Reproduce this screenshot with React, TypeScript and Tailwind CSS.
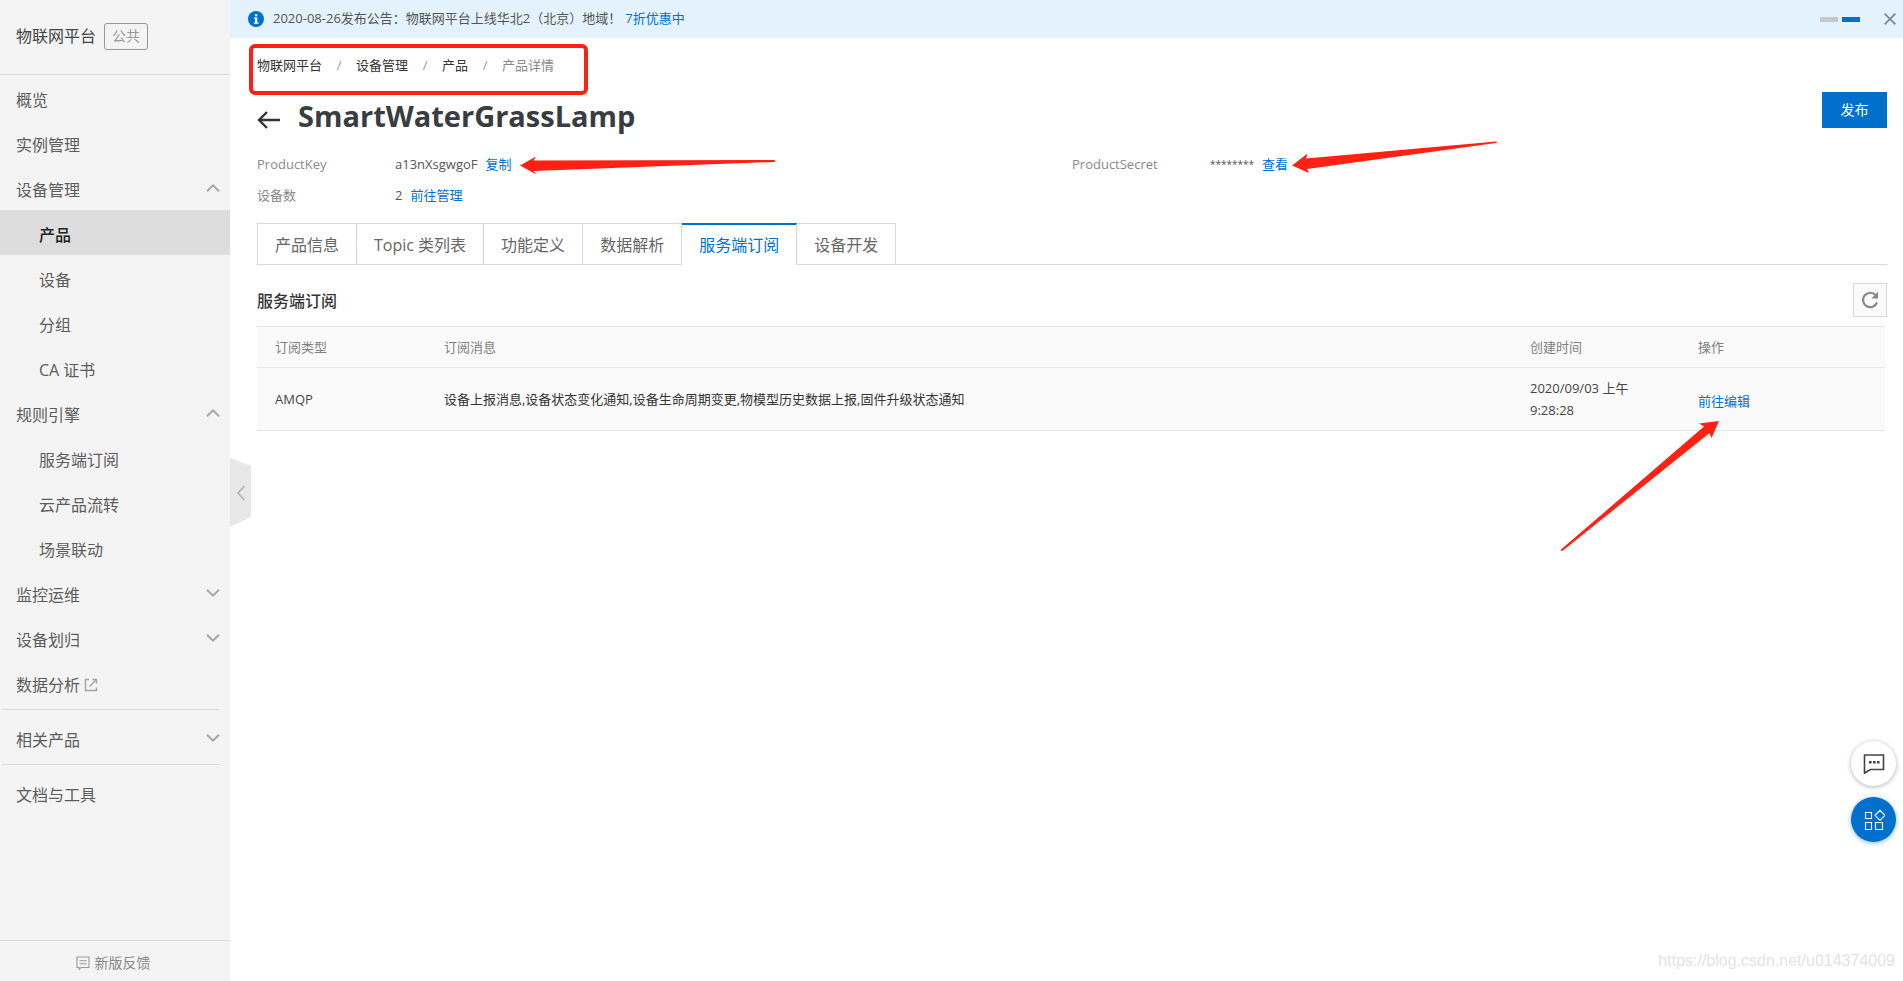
import React, { useState } from 'react';
import clsx from 'clsx';

type NavItem = {
  label: string;
  children?: string[];
  arrow?: 'up' | 'down';
  external?: boolean;
};

const mainNav: NavItem[] = [
  { label: '概览' },
  { label: '实例管理' },
  { label: '设备管理', arrow: 'up', children: ['产品', '设备', '分组', 'CA 证书'] },
  { label: '规则引擎', arrow: 'up', children: ['服务端订阅', '云产品流转', '场景联动'] },
  { label: '监控运维', arrow: 'down' },
  { label: '设备划归', arrow: 'down' },
  { label: '数据分析', external: true },
];

const tabs = ['产品信息', 'Topic 类列表', '功能定义', '数据解析', '服务端订阅', '设备开发'];

const crumbs = ['物联网平台', '设备管理', '产品'];

const Chevron: React.FC<{ dir: 'up' | 'down' }> = ({ dir }) => (
  <svg width="14" height="8" viewBox="0 0 14 8" fill="none" stroke="#a6a6a6" strokeWidth="2" className="mb-1">
    <path d={dir === 'up' ? 'M1 7.2 7 1.4l6 5.8' : 'M1 .8 7 6.6l6-5.8'} />
  </svg>
);

const SideLink: React.FC<{ item: NavItem }> = ({ item }) => (
  <a href="#" className="flex h-[45px] items-center justify-between pt-1 pr-[10px] pl-4 text-base">
    <span className="flex items-center gap-1">
      {item.label}
      {item.external && (
        <svg width="14" height="14" viewBox="0 0 14 14" fill="none" stroke="#a3a3a3" strokeWidth="1.4">
          <path d="M5 1.5H1.5v11h11V9.5M5.5 8.5l6-6M8.5 1.5h4V5.500" />
        </svg>
      )}
    </span>
    {item.arrow && <Chevron dir={item.arrow} />}
  </a>
);

const Sidebar: React.FC = () => (
  <aside className="relative flex w-[230px] shrink-0 flex-col bg-[#f4f4f4] text-[#5c5c5c]">
    <div className="flex h-[75px] items-center gap-2 border-b border-[#d9d9d9] pb-[2px] pl-4">
      <span className="text-base text-[#444]">物联网平台</span>
      <span className="flex h-[27px] items-center rounded-[3px] border border-[#999] px-[7px] text-sm text-[#999]">公共</span>
    </div>
    <nav className="flex-1">
      {mainNav.map((item) => (
        <div key={item.label}>
          <SideLink item={item} />
          {item.children?.map((child) => (
            <a
              key={child}
              href="#"
              className={clsx(
                'flex h-[45px] items-center pt-1 pl-[39px] text-base',
                child === '产品' && 'bg-[#ddd] font-medium text-[#222]'
              )}
            >
              {child}
            </a>
          ))}
        </div>
      ))}
      <div className="mr-[11px] ml-[2px] border-b border-[#d9d9d9] pt-1" />
      <div className="pt-[5px]">
        <SideLink item={{ label: '相关产品', arrow: 'down' }} />
      </div>
      <div className="mr-[11px] ml-[2px] border-b border-[#d9d9d9] pt-1" />
      <div className="pt-[5px]">
        <SideLink item={{ label: '文档与工具' }} />
      </div>
    </nav>
    <a href="#" className="flex h-[41px] items-center justify-center gap-[5px] border-t border-[#d9d9d9] pt-1 pr-1 text-sm text-[#888]">
      <svg width="14" height="14" viewBox="0 0 14 14" fill="none" stroke="#999" strokeWidth="1.1">
        <path d="M1 1h12v10.5H5L3.2 13.2V11.5H1zM3.5 4.8h7M3.5 7.8h7" />
      </svg>
      新版反馈
    </a>
    <button type="button" aria-label="收起菜单" className="absolute top-[458px] left-full cursor-pointer">
      <svg width="21" height="69" viewBox="0 0 21 69" fill="none">
        <path d="M0 0 21 8v51L0 69z" fill="#e8e8e8" />
        <path d="M14.5 28 8 35l6.5 7" stroke="#b5b5b5" strokeWidth="1.8" />
      </svg>
    </button>
  </aside>
);

const Notice: React.FC = () => (
  <div className="flex h-[38px] items-center bg-[#e3f2fd] pr-[7px] pl-[18px] text-[13px] text-[#555]">
    <svg width="16" height="16" viewBox="0 0 16 16" className="mr-[9px]">
      <circle cx="8" cy="8" r="8" fill="#0070cc" />
      <path d="M7 3.2h2.3v2H7zM6 6.5h3.3v5h1.2v1.2H5.8v-1.2H7V7.7H6z" fill="#fff" />
    </svg>
    <span>2020-08-26发布公告：物联网平台上线华北2（北京）地域！</span>
    <a href="#" className="ml-1 text-[#0070cc]">7折优惠中</a>
    <div className="ml-auto flex gap-1">
      <span className="h-[5px] w-[18px] bg-[#c4c8cb]" />
      <span className="h-[5px] w-[18px] bg-[#0070cc]" />
    </div>
    <button type="button" aria-label="关闭" className="ml-6 cursor-pointer">
      <svg width="12" height="12" viewBox="0 0 12 12" stroke="#7d858b" strokeWidth="1.7">
        <path d="M.6.6l10.8 10.8M11.4.6.6 11.4" />
      </svg>
    </button>
  </div>
);

const Breadcrumb: React.FC = () => (
  <nav className="relative flex h-6 items-center text-[13px] text-[#333]">
    {crumbs.map((crumb) => (
      <React.Fragment key={crumb}>
        <a href="#">{crumb}</a>
        <span className="w-[34px] text-center text-[#999]">/</span>
      </React.Fragment>
    ))}
    <span className="text-[#888]">产品详情</span>
    <span className="pointer-events-none absolute -top-[10px] -left-2 h-[51px] w-[339px] rounded-md border-4 border-[#fb2116]" />
  </nav>
);

const Details: React.FC = () => (
  <dl className="grid grid-cols-2 text-[13px] leading-[31px] text-[#555]">
    <div className="flex">
      <dt className="w-[138px] text-[#888]">ProductKey</dt>
      <dd className="relative flex gap-2">
        a13nXsgwgoF
        <a href="#" className="text-[#0070cc]">复制</a>
        <svg width="256" height="19" viewBox="0 0 256 19" className="absolute top-[7px] left-full ml-2" fill="#ff2114">
          <path d="M0 9.500 16 .5 13.500 4.500 254 4q3 1 0 2L13.500 15l3 3.500z" />
        </svg>
      </dd>
    </div>
    <div className="flex">
      <dt className="w-[138px] text-[#888]">ProductSecret</dt>
      <dd className="relative flex gap-2">
        <span className="text-[10px]">********</span>
        <a href="#" className="text-[#0070cc]">查看</a>
        <svg width="208" height="32" viewBox="0 0 208 32" className="absolute -top-[8px] left-full ml-1" fill="#ff2114">
          <path d="M0 24.500 15.500 12.500 14 17.500 204 .5q3 0 0 1.500L15 28l2 4z" />
        </svg>
      </dd>
    </div>
    <div className="flex">
      <dt className="w-[138px] text-[#888]">设备数</dt>
      <dd className="flex gap-2">
        2
        <a href="#" className="text-[#0070cc]">前往管理</a>
      </dd>
    </div>
  </dl>
);

const Tabs: React.FC = () => {
  const [active, setActive] = useState('服务端订阅');

  return (
    <div role="tablist" className="mt-3 flex border-b border-[#d9d9d9]">
      {tabs.map((tab) => (
        <button
          key={tab}
          type="button"
          role="tab"
          aria-selected={tab === active}
          onClick={() => setActive(tab)}
          className={clsx(
            '-mb-px h-[42px] cursor-pointer border-r border-b px-[17px] text-base first:border-l',
            tab === active
              ? 'border-t-2 border-t-[#0070cc] border-r-[#d9d9d9] border-b-white text-[#0070cc]'
              : 'border-t border-[#d9d9d9] pt-px text-[#666]'
          )}
        >
          {tab}
        </button>
      ))}
    </div>
  );
};

const SubscriptionTable: React.FC = () => (
  <div className="pr-[2px]">
    <table className="w-full table-fixed text-left text-[13px] leading-[22px] text-[#444]">
      <thead>
        <tr className="h-[41px] border-y border-[#e5e5e5] bg-[#fafafa] text-[#808080]">
          <th className="w-[169px] pl-[18px] font-normal">订阅类型</th>
          <th className="pl-[18px] font-normal">订阅消息</th>
          <th className="w-[168px] pl-[18px] font-normal">创建时间</th>
          <th className="w-[205px] pl-[18px] font-normal">操作</th>
        </tr>
      </thead>
      <tbody>
        <tr className="h-[63px] border-b border-[#e5e5e5] bg-[#fafafa]">
          <td className="pl-[18px]">AMQP</td>
          <td className="pl-[18px] text-[#333]">设备上报消息,设备状态变化通知,设备生命周期变更,物模型历史数据上报,固件升级状态通知</td>
          <td className="pl-[18px]">2020/09/03 上午<br />9:28:28</td>
          <td className="pt-1 pl-[18px]">
            <span className="relative">
              <a href="#" className="text-[#0070cc]">前往编辑</a>
              <svg width="160" height="132" viewBox="0 0 160 132" className="absolute top-full right-[30px] mt-[10px]" fill="#ff2114">
                <path d="M159 1 139 3.500l5 3L1 129.500q-1 2 2 1L149.500 13l2 5z" />
              </svg>
            </span>
          </td>
        </tr>
      </tbody>
    </table>
  </div>
);

const FloatingButtons: React.FC = () => (
  <div className="fixed right-[7px] bottom-[139px] flex flex-col gap-[11px]">
    <button type="button" aria-label="咨询" className="flex size-[45px] cursor-pointer items-center justify-center rounded-full bg-white shadow-[0_1px_5px_rgba(0,0,0,0.3)]">
      <svg width="22" height="22" viewBox="0 0 22 22" fill="none" stroke="#444" strokeWidth="1.6">
        <path d="M1.500 2h19v14.500H7.500L1.500 20z" />
        <path d="M6 9.300h10.500" strokeWidth="2.600" strokeDasharray="2.600 1.400" />
      </svg>
    </button>
    <button type="button" aria-label="应用" className="flex size-[45px] cursor-pointer items-center justify-center rounded-full bg-[#0070cc] shadow-[0_1px_5px_rgba(0,112,204,0.5)]">
      <svg width="22" height="22" viewBox="0 0 22 22" fill="none" stroke="#fff" strokeWidth="1.100">
        <path d="M2.500 3.500h6v6h-6zM2.500 13.500h6v7h-6zM12.500 13.500h7v7h-7zM17 1.300l5 5-5 5-5-5z" />
      </svg>
    </button>
  </div>
);

const App: React.FC = () => {
  return (
    <div className="flex min-h-screen bg-white font-['Open_Sans','Noto_Sans_CJK_SC',sans-serif]">
      <Sidebar />
      <div className="min-w-0 flex-1">
        <Notice />
        <main className="px-[27px] pt-4 pr-4">
          <Breadcrumb />
          <div className="flex justify-between">
            <div className="flex h-[71px] items-center gap-[18px] pt-[5px]">
              <a href="#" aria-label="返回" className="pt-2">
                <svg width="23" height="18" viewBox="0 0 23 18" fill="none" stroke="#333" strokeWidth="2.400">
                  <path d="M23 9H2M10 1 2 9l8 8" />
                </svg>
              </a>
              <h1 className="text-[29px] font-bold text-[#373d41]">SmartWaterGrassLamp</h1>
            </div>
            <button type="button" className="mt-[14px] h-9 w-[65px] cursor-pointer bg-[#0070cc] text-sm text-white">发布</button>
          </div>
          <Details />
          <Tabs />
          <div className="mt-[18px] mb-[9px] flex items-center justify-between">
            <h2 className="pt-[2px] text-base font-medium text-[#333]">服务端订阅</h2>
            <button type="button" aria-label="刷新" className="flex size-[34px] cursor-pointer items-center justify-center border border-[#d9d9d9] bg-[#fafafa]">
              <svg width="18" height="18" viewBox="0 0 18 18" fill="none" stroke="#888" strokeWidth="2.200">
                <path d="M16 11.500A7.200 7.200 0 1 1 14.500 4" />
                <path d="M17 .8v6.700h-6.700z" fill="#888" stroke="none" />
              </svg>
            </button>
          </div>
          <SubscriptionTable />
        </main>
      </div>
      <FloatingButtons />
      <span className="fixed right-2 bottom-2 font-['Liberation_Sans',sans-serif] text-base text-[#e2e2e2]">https://blog.csdn.net/u014374009</span>
    </div>
  );
};

export default App;
